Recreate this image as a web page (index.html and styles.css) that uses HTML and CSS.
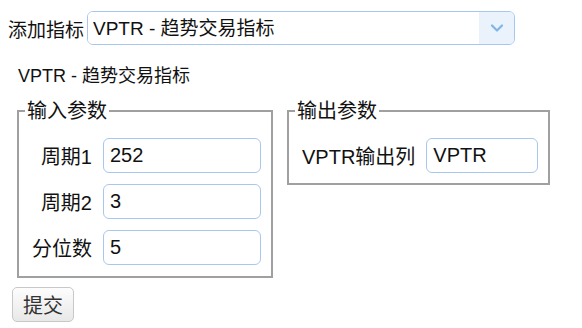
FILE: index.html
```html
<!DOCTYPE html>
<html lang="zh-CN">
<head>
    <meta charset="UTF-8">
    <title>添加指标</title>
    <link rel="stylesheet" href="styles.css">
</head>
<body>
    <div class="top-row">
        <label for="indicator">添加指标</label>
        <div class="select-box">
            <select id="indicator">
                <option>VPTR - 趋势交易指标</option>
            </select>
            <span class="arrow">
                <svg width="14" height="10" viewBox="0 0 14 10"><path d="M2 2.5 L7 7.5 L12 2.5" fill="none" stroke="#7fb6ea" stroke-width="2.2" stroke-linecap="round" stroke-linejoin="round"/></svg>
            </span>
        </div>
    </div>

    <div class="title">VPTR - 趋势交易指标</div>

    <div class="params">
        <fieldset class="box box-in">
            <legend>输入参数</legend>
            <div class="grid">
                <label for="p1">周期1</label>
                <input type="text" id="p1" value="252">
                <label for="p2">周期2</label>
                <input type="text" id="p2" value="3">
                <label for="p3">分位数</label>
                <input type="text" id="p3" value="5">
            </div>
        </fieldset>

        <fieldset class="box box-out">
            <legend>输出参数</legend>
            <div class="grid">
                <label for="o1">VPTR输出列</label>
                <input type="text" id="o1" value="VPTR">
            </div>
        </fieldset>
    </div>

    <button class="submit">提交</button>
</body>
</html>
```

FILE: styles.css
```css
body {
    margin: 8px;
    font-family: "Liberation Sans", "Noto Sans CJK SC", sans-serif;
    font-size: 20px;
    color: #111;
    background: #fff;
}
.top-row {
    display: flex;
    align-items: center;
    gap: 3px;
    height: 40px;
    font-size: 19px;
}
.select-box {
    display: flex;
    width: 428px;
    height: 34px;
    box-sizing: border-box;
    border: 1px solid #a9c7ee;
    border-radius: 6px;
    overflow: hidden;
}
.select-box select {
    flex: 1;
    appearance: none;
    border: none;
    outline: none;
    background: #fff;
    font: inherit;
    color: #111;
    padding: 0 5px;
}
.arrow {
    width: 35px;
    background: #eaf2fb;
    display: flex;
    align-items: center;
    justify-content: center;
}
.title {
    margin: 16px 0 0 10px;
    font-size: 18px;
    line-height: 24px;
}
.params {
    display: flex;
    align-items: flex-start;
    gap: 14px;
    margin: 10px 0 0 9px;
}
.box {
    margin: 0;
    padding: 14px 10px 11px 13px;
    border: 2px solid #a0a0a0;
    box-sizing: border-box;
}
.box legend {
    padding: 0 2px;
    margin-left: -7px;
    line-height: 26px;
}
.box-in { width: 256px; }
.box-out { width: 263px; padding-bottom: 10px; }
.grid {
    display: grid;
    grid-template-columns: auto 1fr;
    align-items: center;
    column-gap: 11px;
    row-gap: 11px;
}
.grid label {
    text-align: right;
}
.grid input {
    height: 35px;
    box-sizing: border-box;
    border: 1px solid #a9c7ee;
    border-radius: 6px;
    padding: 0 6px;
    font: inherit;
    color: #111;
    min-width: 0;
}
.submit {
    margin: 9px 0 0 4px;
    height: 35px;
    padding: 0 10px;
    font: inherit;
    color: #333;
    border: 1px solid #c8c8c8;
    border-radius: 5px;
    background: linear-gradient(#fdfdfd, #e8e8e8);
}
```
